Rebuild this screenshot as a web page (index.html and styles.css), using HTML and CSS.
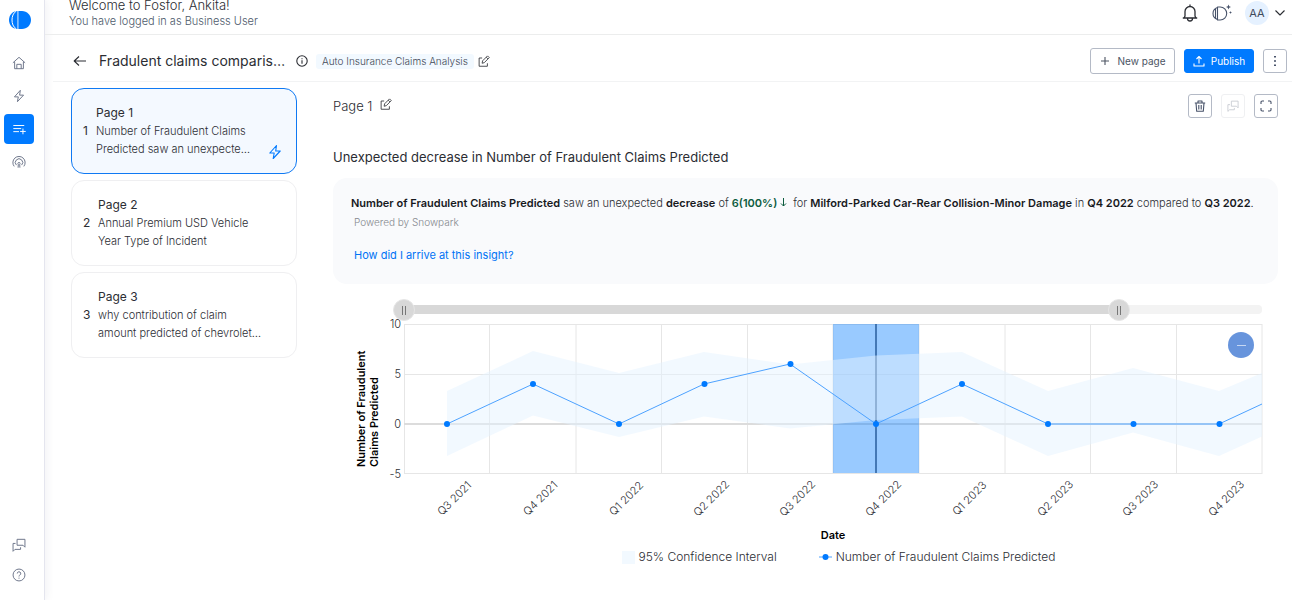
FILE: index.html
```html
<!DOCTYPE html>
<html lang="en">
<head>
<meta charset="utf-8">
<meta name="viewport" content="width=device-width, initial-scale=1">
<title>Fradulent claims comparison</title>
<link rel="stylesheet" href="styles.css">
</head>
<body>
<svg class="defs" width="0" height="0" aria-hidden="true">
  <symbol id="bolt" viewBox="0 0 16 16"><path d="M9.5 1.500 2.800 9h4.400l-1 5.500L13.200 7H8.700z"/></symbol>
  <symbol id="chat" viewBox="0 0 16 16"><path d="M5.800 1.500h9v9l-2.200-2.200H5.800zM4 6.200H1.200v9l2.200-2.200h6.400v-2.400"/></symbol>
  <symbol id="edit" viewBox="0 0 16 16"><path d="M5.500 4H1.500v11H12.500V11M5.500 11l.6-3.200 6.600-6.600 2.300 2.300-6.600 6.700zM11 3l2.200 2.200"/></symbol>
</svg>
<div class="app">
  <nav class="rail" aria-label="Main">
    <a class="logo" href="#" aria-label="Fosfor home">
      <svg width="24" height="20" viewBox="0 0 24 20"><path class="solid" d="M9.500 1C4.500 1 1 5 1 10s3.500 9 8.500 9z"/><path class="solid" d="M10.400 1H14c5 0 9 4 9 9s-4 9-9 9h-3.600z"/><path class="cut" d="M8.200 1.200C5.200 3 4 6.500 4 10s1.200 7 4.200 8.800"/></svg>
    </a>
    <a class="rail-link" href="#" aria-label="Home"><svg class="icon" width="14" height="14" viewBox="0 0 16 16"><path d="M1 7.800 8 1.500l7 6.300M3 6.500V14.500H13V6.500M5.500 14.500V9.500H10.500v5"/></svg></a>
    <a class="rail-link" href="#" aria-label="Insights"><svg class="icon" width="14" height="14"><use href="#bolt"/></svg></a>
    <a class="rail-link active" href="#" aria-label="Stories" aria-current="page"><svg class="icon" width="14" height="14" viewBox="0 0 16 16"><path d="M1.500 4h12.500M1.500 7.500h9M1.500 11h6.500M12.500 7.500v6.500M9.300 10.800h6.400"/></svg></a>
    <a class="rail-link" href="#" aria-label="Signals"><svg class="icon" width="14" height="14" viewBox="0 0 16 16"><path d="M2.500 13A7 7 0 1 1 13.500 13M5 11.500A4.200 4.200 0 1 1 11 11.500M7 14.500l.2-4a1.200 1.200 0 1 1 1.600 0l.2 4"/></svg></a>
    <span class="grow"></span>
    <a class="rail-link small" href="#" aria-label="Feedback"><svg class="icon" width="14" height="14"><use href="#chat"/></svg></a>
    <a class="rail-link small" href="#" aria-label="Help"><svg class="icon" width="14" height="14" viewBox="0 0 16 16"><circle cx="8" cy="8" r="6.800"/><path d="M6 6.300a2 2 0 1 1 2.700 1.900Q8 8.500 8 9.700M8 11v1.200"/></svg></a>
  </nav>

  <div class="content">
    <header class="welcome">
      <div class="greeting">
        <div class="hello">Welcome to Fosfor, Ankita!</div>
        <div class="role">You have logged in as Business User</div>
      </div>
      <div class="account">
        <button class="plain" aria-label="Notifications"><svg class="icon dark bell" width="18" height="18" viewBox="0 0 18 18"><path d="M9 .5v1.500M1.800 14h14.400M3.200 13.800l.8-1.800V7.500a5 5 0 0 1 10 0V12l.8 1.800M6.500 14.500a2.500 2.500 0 0 0 5 0"/></svg></button>
        <button class="plain" aria-label="Assistant"><svg class="icon slate" width="20" height="18" viewBox="0 0 20 18"><path d="M5.500 3.500C2.500 4.500 1 7 1 9.500s1.500 5 4.500 6zM3.500 5v9M5.500 3h2.700a6.500 6.500 0 0 1 0 13H5.500z"/><path class="fill" d="m16.500.5.7 1.800 1.800.7-1.800.7-.7 1.800-.7-1.800L14 3l1.800-.7zM18.500 7l.4 1.100 1.100.4-1.100.4-.4 1.100-.4-1.100-1.100-.4 1.100-.4z"/></svg></button>
        <button class="plain profile" aria-label="Account menu, AA"><span class="avatar">AA</span><svg class="icon dark" width="12" height="12" viewBox="0 0 12 12"><path d="m1.500 3.500 4.500 4.500 4.500-4.500"/></svg></button>
      </div>
    </header>

    <div class="titlebar">
      <button class="plain back" aria-label="Back"><svg class="icon dark" width="14" height="14" viewBox="0 0 14 14"><path d="M13 7H1.500M6 2.500 1.200 7 6 11.500"/></svg></button>
      <h1>Fradulent claims comparis…</h1>
      <button class="plain info" aria-label="Information"><svg class="icon dark" width="12" height="12" viewBox="0 0 12 12"><circle cx="6" cy="6" r="5.200"/><path d="M6 5.200v3.500M6 3.200v1"/></svg></button>
      <span class="tag">Auto Insurance Claims Analysis</span>
      <button class="plain" aria-label="Edit story"><svg class="icon dark" width="12" height="12"><use href="#edit"/></svg></button>
      <span class="grow"></span>
      <div class="actions">
        <button class="btn new"><svg class="icon" width="10" height="10" viewBox="0 0 10 10"><path d="M5 1v8M1 5h8"/></svg>New page</button>
        <button class="btn publish"><svg class="icon" width="12" height="12" viewBox="0 0 12 12"><path d="M6 8.500V1.500M3.500 4 6 1.500 8.500 4M1 8.500V11h10V8.500"/></svg>Publish</button>
        <button class="btn square" aria-label="More options"><svg class="icon slate" width="12" height="12" viewBox="0 0 12 12"><path class="fill" d="M5 1h2v1.500H5zM5 5.200h2v1.500H5zM5 9.500h2V11H5z"/></svg></button>
      </div>
    </div>

    <div class="workspace">
      <aside class="pages" aria-label="Pages">
        <a class="card selected" href="#"><span class="num">1</span><span class="body"><span class="name">Page 1</span><span class="desc">Number of Fraudulent Claims</span><span class="desc">Predicted saw an unexpecte…</span></span><svg class="icon bolt" width="16" height="16"><use href="#bolt"/></svg></a>
        <a class="card" href="#"><span class="num">2</span><span class="body"><span class="name">Page 2</span><span class="desc">Annual Premium USD Vehicle</span><span class="desc">Year Type of Incident</span></span></a>
        <a class="card" href="#"><span class="num">3</span><span class="body"><span class="name">Page 3</span><span class="desc">why contribution of claim</span><span class="desc">amount predicted of chevrolet…</span></span></a>
      </aside>

      <main class="page">
        <div class="page-head">
          <span class="page-name">Page 1</span>
          <button class="plain rename" aria-label="Rename page"><svg class="icon dark" width="12" height="12"><use href="#edit"/></svg></button>
          <span class="grow"></span>
          <div class="actions">
            <button class="btn square" aria-label="Delete page"><svg class="icon slate" width="12" height="12" viewBox="0 0 12 12"><path d="M.8 3h10.400M4 3V1h4v2M2 3l.7 8.300h6.600L10 3M4.800 5v4.500M7.200 5v4.500"/></svg></button>
            <button class="btn square faded" aria-label="Comments" disabled><svg class="icon" width="12" height="12"><use href="#chat"/></svg></button>
            <button class="btn square" aria-label="Full screen"><svg class="icon slate" width="12" height="12" viewBox="0 0 12 12"><path d="M1 4V2.200Q1 1 2.200 1H4M8 1h1.800Q11 1 11 2.200V4M11 8v1.800Q11 11 9.800 11H8M4 11H2.200Q1 11 1 9.800V8"/></svg></button>
          </div>
        </div>
        <h2>Unexpected decrease in Number of Fraudulent Claims Predicted</h2>
        <section class="insight">
          <p class="summary"><b>Number of Fraudulent Claims Predicted</b> saw an unexpected <b>decrease</b> of <b class="good">6(100%) <svg class="arrow" width="7" height="9" viewBox="0 0 7 9"><path d="M3.500 0v8M1 5.500 3.500 8 6 5.500"/></svg></b>&nbsp; for <b>Milford-Parked Car-Rear Collision-Minor Damage</b> in <b>Q4 2022</b> compared to <b>Q3 2022</b>.</p>
          <p class="powered">Powered by Snowpark</p>
          <a class="how" href="#">How did I arrive at this insight?</a>
        </section>

        <section class="chart">
          <div class="range">
            <span class="track"><span class="selected-span" style="width:83.33%"></span></span>
            <input type="range" min="0" max="858" value="0" aria-label="Range start">
            <input type="range" min="0" max="858" value="715" aria-label="Range end">
          </div>
          <svg class="plot" viewBox="333 319 945 226" role="img" aria-label="Number of Fraudulent Claims Predicted by date">
            <g class="grid">
              <path d="M404 324.500H1262M404 374.500H1262M404 473.500H1262M404.500 324V474M489.500 324V474M576 324V474M661.500 324V474M747.500 324V474M833 324V474M919 324V474M1005 324V474M1090.500 324V474M1176.500 324V474M1262 324V474"/>
              <path class="zero" d="M404 424H1262"/>
            </g>
            <rect class="highlight" x="833" y="324" width="86" height="149"/>
            <path class="cursor" d="M876 324V473"/>
            <path class="band" d="M447 391 533 351 619 373 704 352 790 364.500 876 355.500 962 352 1048 391 1133 368 1219 391 1262 373V436.500L1219 456 1133 432.500 1048 456 962 416.500 876 420 790 428.500 704 416.500 619 437 533 415.500 447 456z"/>
            <path class="line" d="M447 424 533 384 619 424 704 384 790 364 876 424 962 384 1048 424H1219L1262 404"/>
            <g class="dots"><circle cx="447" cy="424" r="3"/><circle cx="533" cy="384" r="3"/><circle cx="619" cy="424" r="3"/><circle cx="704.500" cy="384" r="3"/><circle cx="790.500" cy="364" r="3"/><circle cx="876" cy="424" r="3"/><circle cx="962" cy="384" r="3"/><circle cx="1048" cy="424" r="3"/><circle cx="1133.500" cy="424" r="3"/><circle cx="1219.500" cy="424" r="3"/></g>
            <g class="ylabels"><text x="401" y="328">10</text><text x="401" y="378">5</text><text x="401" y="428">0</text><text x="401" y="478">-5</text></g>
            <g class="xlabels">
              <text transform="translate(457 501) rotate(-45)">Q3 2021</text><text transform="translate(543 501) rotate(-45)">Q4 2021</text><text transform="translate(629 501) rotate(-45)">Q1 2022</text><text transform="translate(714 501) rotate(-45)">Q2 2022</text><text transform="translate(800 501) rotate(-45)">Q3 2022</text><text transform="translate(886 501) rotate(-45)">Q4 2022</text><text transform="translate(972 501) rotate(-45)">Q1 2023</text><text transform="translate(1058 501) rotate(-45)">Q2 2023</text><text transform="translate(1143 501) rotate(-45)">Q3 2023</text><text transform="translate(1229 501) rotate(-45)">Q4 2023</text>
            </g>
            <g class="axis-title"><text transform="translate(365 467) rotate(-90)">Number of Fraudulent</text><text transform="translate(378 467) rotate(-90)">Claims Predicted</text><text class="mid" x="833" y="539">Date</text></g>
          </svg>
          <button class="zoom-out" aria-label="Zoom out"></button>
          <div class="legend">
            <span class="key"><span class="swatch"></span>95% Confidence Interval</span>
            <span class="key"><svg width="13" height="8" viewBox="0 0 13 8"><path class="line" d="M0 4h13"/><circle class="dot" cx="6.500" cy="4" r="3"/></svg>Number of Fraudulent Claims Predicted</span>
          </div>
        </section>
      </main>
    </div>
  </div>
</div>
</body>
</html>
```
FILE: styles.css
```css
* { box-sizing: border-box; }
body { margin: 0; font-family: Inter, "Liberation Sans", sans-serif; font-size: 12px; line-height: 18px; color: #2b2d33; background: #fff; }
h1, h2, p { margin: 0; font-weight: 400; }
a { color: inherit; text-decoration: none; }
button { font: inherit; color: inherit; cursor: pointer; }
.defs { position: absolute; }
.icon { display: block; flex: none; fill: none; stroke: currentColor; stroke-width: 1.1; stroke-linejoin: round; }
.icon .fill { fill: currentColor; stroke: none; }
.bell { stroke-width: 1.3; }
.dark { color: #2b2d33; }
.slate { color: #475269; }
.grow { flex: 1; }
.plain { display: flex; align-items: center; padding: 0; border: 0; background: none; }

.app { display: flex; min-height: 100vh; }
.rail { display: flex; flex-direction: column; flex: none; width: 45px; padding: 10px 8px 10px 4px; border-right: 1px solid #e4e5ee; box-shadow: 2px 0 8px rgba(40, 40, 90, .06); color: #6b7488; }
.logo { display: flex; justify-content: center; margin-bottom: 18px; }
.logo svg { display: block; }
.solid { fill: #007aff; }
.cut { fill: none; stroke: #fff; stroke-width: 1; }
.rail-link { display: flex; align-items: center; justify-content: center; width: 30px; height: 30px; margin-bottom: 3px; border-radius: 4px; padding-right: 1px; }
.rail-link.small { margin: 0; }
.rail-link.active { background: #007aff; color: #fff; }

.content { flex: 1; min-width: 0; display: flex; flex-direction: column; }
.welcome { display: flex; justify-content: space-between; align-items: flex-end; height: 35px; padding: 0 6px 2px 24px; border-bottom: 1px solid #eceded; }
.hello { font-size: 13px; line-height: 11px; font-weight: 300; }
.role { font-size: 11px; line-height: 21px; font-weight: 300; color: #4d5a6b; }
.account { display: flex; align-items: center; gap: 13px; height: 38px; }
.profile { gap: 5px; }
.avatar { width: 24px; height: 24px; border-radius: 50%; background: #e5f1ff; color: #3f4a5c; font-size: 11px; line-height: 24px; text-align: center; }

.titlebar { display: flex; align-items: center; gap: 12px; height: 47px; margin-left: 8px; padding: 6px 5px 0 20px; border-bottom: 1px solid #f2f3f4; }
h1 { width: 185px; font-size: 14px; line-height: 20px; white-space: nowrap; }
.tag { margin-left: -4px; padding: 0 6px; border-radius: 3px; background: #f2f9ff; color: #3f4856; font-size: 10px; font-weight: 300; line-height: 15px; white-space: nowrap; }
.tag + .plain { margin-left: -8px; }
.actions { display: flex; align-items: center; gap: 9px; }
.btn { display: flex; align-items: center; justify-content: center; gap: 8px; height: 24px; padding: 0; border: 1px solid #b4bac6; border-radius: 3px; background: #fff; font-size: 10px; }
.new { width: 85px; height: 26px; color: #4c5463; }
.publish { width: 70px; gap: 6px; border-color: #007aff; background: #007aff; color: #fff; }
.square { width: 24px; }
.faded { border-color: #eff0f2; color: #c3c7cf; }

.workspace { display: flex; gap: 36px; padding: 6px 14px 0 26px; }
.pages { display: flex; flex-direction: column; gap: 6px; flex: none; width: 226px; }
.card { position: relative; display: flex; align-items: center; gap: 7px; height: 86px; padding: 0 12px 0 11px; border: 1px solid #efeff1; border-radius: 13px; }
.card.selected { gap: 5px; border-color: #0f79f3; background: #f4f9ff; }
.num { flex: none; width: 8px; }
.body { display: flex; flex-direction: column; font-weight: 300; font-size: 11px; white-space: nowrap; }
.name { font-size: 12px; font-weight: 400; }
.bolt { position: absolute; right: 13px; bottom: 13px; color: #007aff; }

.page { flex: 1; min-width: 0; }
.page-head { display: flex; align-items: center; gap: 8px; padding-top: 6px; }
.page-name { font-size: 13px; font-weight: 300; }
.rename { padding-bottom: 4px; }
h2 { margin-top: 29px; font-size: 13px; line-height: 20px; }
.insight { min-height: 106px; margin-top: 11px; padding: 16px 18px; border-radius: 14px; background: #f9fafc; }
.summary { font-size: 11px; font-weight: 300; }
.summary b { font-weight: 600; color: #17191d; }
.summary .good { color: #0d5c3f; }
.arrow { fill: none; stroke: currentColor; }
.powered { padding: 1px 3px 0; color: #85888e; font-size: 10px; font-weight: 300; }
.how { display: inline-block; margin-top: 15px; padding-left: 3px; color: #0073f5; font-size: 11px; }

.chart { position: relative; padding-top: 15px; }
.range { position: relative; height: 22px; margin: 0 5px 0 60px; }
.track { position: absolute; top: 6px; left: 11px; right: 11px; height: 9px; border-radius: 4px; background: #f3f3f3; }
.selected-span { display: block; height: 9px; background: #d8d8d8; }
.range input { position: absolute; top: 0; left: 0; width: 100%; height: 22px; margin: 0; appearance: none; background: none; pointer-events: none; }
.range input::-webkit-slider-thumb { appearance: none; width: 22px; height: 22px; border: 1px solid #e6e6e6; border-radius: 50%; background: linear-gradient(90deg, #777 1px, transparent 1px 3px, #777 3px) center / 4px 9px no-repeat #d8d8d8; pointer-events: auto; }
.plot { display: block; width: 100%; margin-top: -2px; overflow: visible; font-size: 11px; fill: #2b2d33; }
.grid path { fill: none; stroke: #e6e6e6; }
.grid .zero { stroke: #dcdcdc; stroke-width: 2; }
.highlight { fill: #007aff; fill-opacity: .4; }
.band { fill: #e4f2ff; fill-opacity: .48; }
.cursor { stroke: #1f5596; stroke-opacity: .7; stroke-width: 2; }
.line { fill: none; stroke: #4da2ff; stroke-width: 1; }
.dots, .dot { fill: #007aff; }
.ylabels { text-anchor: end; font-weight: 300; }
.xlabels { text-anchor: middle; font-weight: 300; }
.axis-title { font-weight: 600; fill: #000; }
.mid { text-anchor: middle; }
.zoom-out { position: absolute; top: 48px; right: 24px; width: 26px; height: 26px; border: 0; border-radius: 50%; background: linear-gradient(#c5d7f3, #c5d7f3) center / 9px 1px no-repeat #6794dc; }
.legend { display: flex; justify-content: center; gap: 42px; padding-top: 3px; padding-left: 66px; font-size: 12px; font-weight: 300; }
.key { display: flex; align-items: center; gap: 4px; }
.swatch { width: 13px; height: 13px; background: #f2f9ff; }
```
